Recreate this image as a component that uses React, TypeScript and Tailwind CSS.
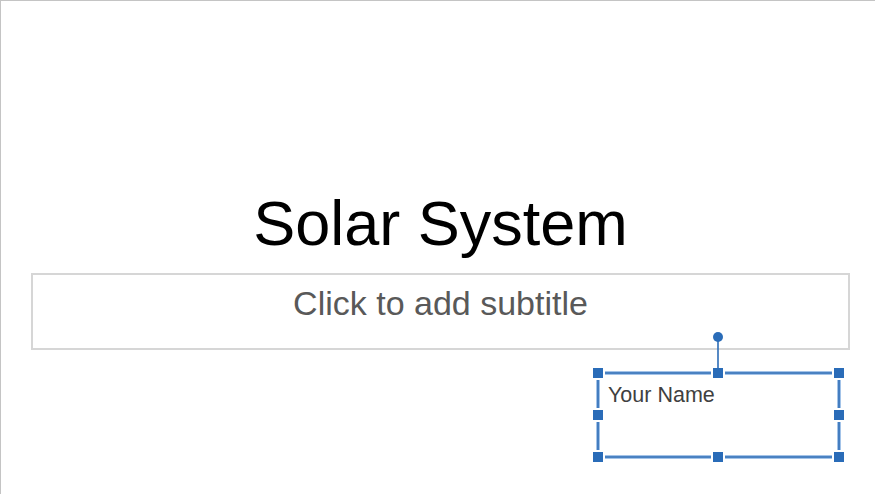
import React from 'react';

const FONT = { fontFamily: '"Liberation Sans", Arial, sans-serif' };

function Selection() {
  // box corners in svg coords: (8,44) -> (249,128)
  const L = 8, T = 44, R = 249, B = 128, MX = 128, MY = 86;
  const segs: [number, number, number, number][] = [
    [L + 7, T, MX - 7, T],
    [MX + 7, T, R - 7, T],
    [L + 7, B, MX - 7, B],
    [MX + 7, B, R - 7, B],
    [L, T + 7, L, MY - 7],
    [L, MY + 7, L, B - 7],
    [R, T + 7, R, MY - 7],
    [R, MY + 7, R, B - 7],
  ];
  const handles: [number, number][] = [
    [L, T], [MX, T], [R, T],
    [L, MY], [R, MY],
    [L, B], [MX, B], [R, B],
  ];
  return (
    <svg
      className="absolute left-[-8px] top-[-44px] pointer-events-none"
      width="257"
      height="136"
      viewBox="0 0 257 136"
    >
      {segs.map(([x1, y1, x2, y2], i) => (
        <g key={i}>
          <line x1={x1} y1={y1} x2={x2} y2={y2} stroke="#a3c3e8" strokeWidth="4" />
          <line x1={x1} y1={y1} x2={x2} y2={y2} stroke="#2c6cb6" strokeWidth="1.6" />
        </g>
      ))}
      <line x1={MX} y1="12" x2={MX} y2={T - 5} stroke="#2c6cb6" strokeWidth="1.6" />
      <circle cx={MX} cy="8" r="5" fill="#2a6cb8" />
      {handles.map(([x, y], i) => (
        <rect key={i} x={x - 5} y={y - 5} width="10" height="10" fill="#2a6cb8" />
      ))}
    </svg>
  );
}

export default function App() {
  return (
    <div className="w-[875px] h-[494px] overflow-hidden bg-white border-t border-l border-[#c4c4c4]" style={FONT}>
      {/* Title */}
      <div className="mt-[186px] h-[72px] leading-[72px] text-[63px] text-black text-center w-[879px]">
        Solar System
      </div>

      {/* Subtitle placeholder */}
      <div className="mt-[14px] ml-[30px] w-[819px] h-[77px] border-2 border-[#d6d6d6] pt-[8px] text-center text-[34px] leading-[40px] text-[#595959]">
        Click to add subtitle
      </div>

      {/* Selected text box */}
      <div className="relative mt-[23px] ml-[597px] w-[241px] h-[84px]">
        <Selection />
        <div className="pl-[10px] pt-[9px] text-[21.5px] leading-[26px] text-[#404040]">Your Name</div>
      </div>
    </div>
  );
}
